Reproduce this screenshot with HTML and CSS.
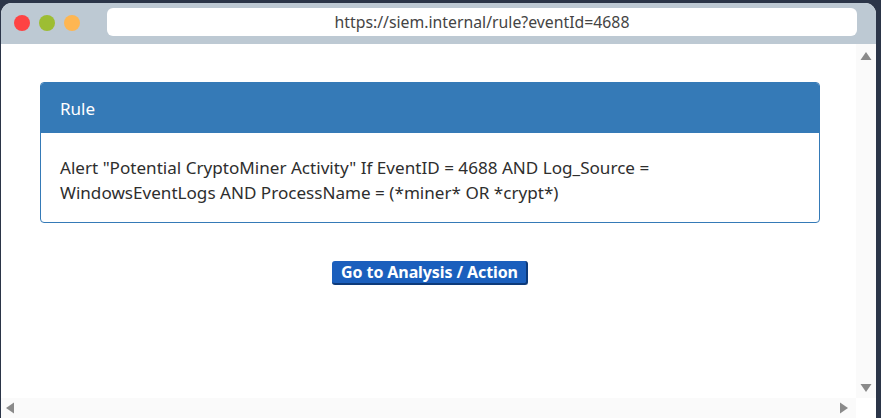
FILE: index.html
```html
<!DOCTYPE html>
<html>
<head>
<meta charset="utf-8">
<link rel="stylesheet" href="styles.css">
</head>
<body>
<div class="frame">
  <div class="window">
    <div class="titlebar">
      <div class="lights">
        <span class="dot red"></span>
        <span class="dot green"></span>
        <span class="dot yellow"></span>
      </div>
      <div class="url">https://siem.internal/rule?eventId=4688</div>
    </div>
    <div class="viewport">
      <div class="view-row">
        <div class="content">
          <div class="card">
            <div class="card-head">Rule</div>
            <div class="card-body">Alert "Potential CryptoMiner Activity" If EventID = 4688 AND Log_Source = WindowsEventLogs AND ProcessName = (*miner* OR *crypt*)</div>
          </div>
          <div class="actions">
            <button class="btn">Go to Analysis / Action</button>
          </div>
        </div>
        <div class="vscroll">
          <svg class="arr" width="12" height="10" viewBox="0 0 12 10"><path d="M6 1 L11.5 9 L0.5 9 Z" fill="#8a8a8a"/></svg>
          <svg class="arr" width="12" height="10" viewBox="0 0 12 10"><path d="M6 9 L11.5 1 L0.5 1 Z" fill="#8a8a8a"/></svg>
        </div>
      </div>
      <div class="hscroll">
        <svg class="arr" width="10" height="12" viewBox="0 0 10 12"><path d="M1 6 L9 0.5 L9 11.5 Z" fill="#8a8a8a"/></svg>
        <svg class="arr" width="10" height="12" viewBox="0 0 10 12"><path d="M9 6 L1 0.5 L1 11.5 Z" fill="#8a8a8a"/></svg>
      </div>
    </div>
  </div>
</div>
</body>
</html>
```
FILE: styles.css
```css
* { box-sizing: border-box; }
html, body { margin: 0; padding: 0; }
body {
  font-family: "Noto Sans", "Open Sans", sans-serif;
  background: #2b3548;
}
.frame {
  width: 881px;
  height: 418px;
  padding: 3px 5px 0 1px;
  background: #2b3548;
}
.window {
  height: 415px;
  border-radius: 11px 11px 0 0;
  overflow: hidden;
  background: #fff;
  display: flex;
  flex-direction: column;
}
.titlebar {
  height: 41px;
  background: #bdc9d3;
  display: flex;
  align-items: center;
  flex-shrink: 0;
}
.lights {
  display: flex;
  gap: 9px;
  padding-left: 13px;
  width: 106px;
  margin-top: -1px;
}
.dot {
  width: 16px;
  height: 16px;
  border-radius: 50%;
  display: block;
}
.red { background: #fe4343; }
.green { background: #9dbd33; }
.yellow { background: #feb652; }
.url {
  width: 750px;
  height: 28px;
  margin-top: -3px;
  background: #fff;
  border-radius: 6px;
  display: flex;
  align-items: center;
  justify-content: center;
  font-size: 15.8px;
  color: #444;
}
.viewport {
  flex: 1;
  display: flex;
  flex-direction: column;
  min-height: 0;
}
.view-row {
  flex: 1;
  display: flex;
  min-height: 0;
}
.content {
  flex: 1;
  padding: 38px 36px 0 39px;
}
.card {
  border: 1px solid #357ab7;
  border-radius: 4px;
  overflow: hidden;
}
.card-head {
  background: #357ab7;
  color: #fff;
  height: 50px;
  padding-left: 19px;
  display: flex;
  align-items: center;
  font-size: 17px;
}
.card-body {
  padding: 22px 19px 17px;
  font-size: 17.1px;
  line-height: 25px;
  color: #2e2e2e;
}
.actions {
  display: flex;
  justify-content: center;
  padding-top: 38px;
}
.btn {
  font-family: "Noto Sans", "Open Sans", sans-serif;
  font-weight: bold;
  font-size: 16px;
  color: #fff;
  background: #1b5fbd;
  border: none;
  border-right: 2px solid #0d3a7a;
  border-bottom: 2px solid #0d3a7a;
  border-radius: 3px;
  height: 24px;
  padding: 0 8px 0 9px;
  line-height: 22px;
  letter-spacing: -0.1px;
}
.vscroll {
  width: 20px;
  background: #fafafa;
  display: flex;
  flex-direction: column;
  justify-content: space-between;
  align-items: center;
  padding: 7px 0 5px;
}
.hscroll {
  height: 20px;
  width: 855px;
  background: #fafafa;
  display: flex;
  justify-content: space-between;
  align-items: center;
  padding: 0 7px 0 4px;
  flex-shrink: 0;
}
.arr { display: block; }
```
